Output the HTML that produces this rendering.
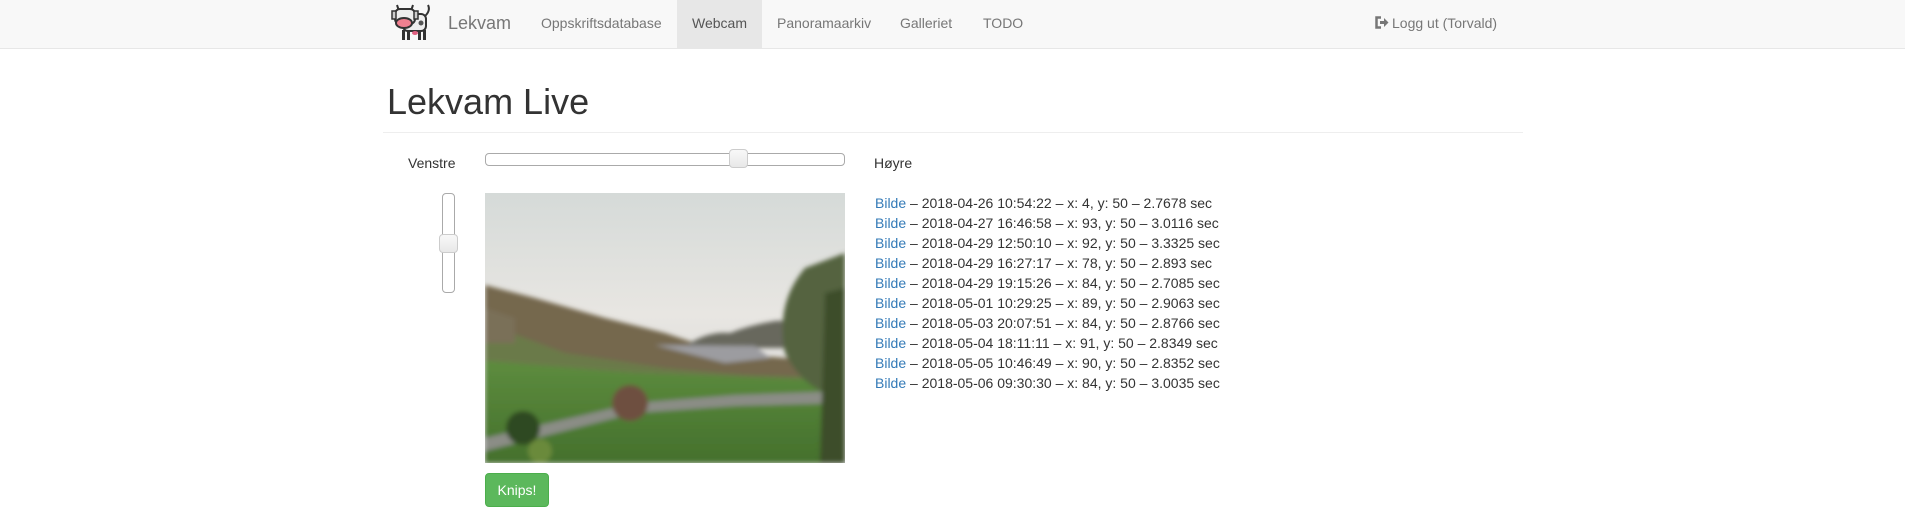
<!DOCTYPE html>
<html><head><meta charset="utf-8"><style>
*{box-sizing:border-box}
body{margin:0;width:1905px;height:522px;background:#fff;font-family:"Liberation Sans",Arial,sans-serif;font-size:14px;color:#333;position:relative;overflow:hidden}
.nav{position:absolute;left:0;top:0;width:1905px;height:49px;background:#f8f8f8;border-bottom:1px solid #e7e7e7}
.a{position:absolute;top:0;height:48px;line-height:46px;color:#777;font-size:14px;white-space:nowrap}
.abs{position:absolute;white-space:nowrap}
.row{line-height:20px}
.row a{color:#337ab7}
</style></head><body>
<div class="nav">
<svg class="abs" style="left:391px;top:3px" width="45" height="38" viewBox="0 0 45 38">
<path d="M6 2 L8 8 M22 2 L20 8" stroke="#333" stroke-width="2"/>
<path d="M33 14 Q40 8 37 2" stroke="#333" stroke-width="2" fill="none"/>
<rect x="12" y="11" width="23" height="17" rx="5" fill="#eee" stroke="#333" stroke-width="2"/>
<rect x="4" y="6" width="20" height="15" rx="5" fill="#eee" stroke="#333" stroke-width="2"/>
<rect x="1" y="8" width="4" height="8" fill="#ccc" stroke="#333" stroke-width="1.5"/>
<rect x="23" y="8" width="4" height="8" fill="#ccc" stroke="#333" stroke-width="1.5"/>
<ellipse cx="13" cy="20" rx="8" ry="5" fill="#f08090" stroke="#333" stroke-width="2"/>
<circle cx="30" cy="20" r="2.5" fill="#555"/>
<rect x="11" y="27" width="3" height="10" fill="#333"/><rect x="16" y="27" width="3" height="10" fill="#333"/>
<rect x="27" y="27" width="3" height="10" fill="#333"/><rect x="32" y="27" width="3" height="10" fill="#333"/>
<ellipse cx="24" cy="30" rx="3" ry="2" fill="#e06080"/>
</svg>
<span class="a" style="left:448px;font-size:18px;line-height:46px">Lekvam</span>
<span class="a" style="left:541px">Oppskriftsdatabase</span>
<span class="a" style="left:677px;width:85px;background:#e7e7e7;color:#555;text-align:center">Webcam</span>
<span class="a" style="left:777px">Panoramaarkiv</span>
<span class="a" style="left:900px">Galleriet</span>
<span class="a" style="left:983px">TODO</span>
<svg class="abs" style="left:1374px;top:16px" width="15" height="13" viewBox="0 0 15 13"><path d="M7 1.5H2.5V11.5H7" stroke="#777" stroke-width="2.5" fill="none"/><path d="M6 5H10V2L14.5 6.5L10 11V8H6Z" fill="#777"/></svg>
<span class="a" style="left:1392px">Logg ut (Torvald)</span>
</div>
<div class="abs" style="left:387px;top:78px;font-size:36px;line-height:48px;color:#333">Lekvam Live</div>
<div class="abs" style="left:383px;top:132px;width:1140px;height:1px;background:#eee"></div>
<div class="abs" style="left:408px;top:153px;line-height:20px">Venstre</div>
<div class="abs" style="left:485px;top:153px;width:360px;height:13px;border:1px solid #aaa;border-radius:4px;background:#fff"></div>
<div class="abs" style="left:729px;top:149px;width:19px;height:19px;border:1px solid #ccc;border-radius:4px;background:linear-gradient(#f8f8f8,#e8e8e8)"></div>
<div class="abs" style="left:874px;top:153px;line-height:20px">Høyre</div>
<div class="abs" style="left:442px;top:193px;width:13px;height:100px;border:1px solid #aaa;border-radius:4px;background:#fff"></div>
<div class="abs" style="left:439px;top:234px;width:19px;height:19px;border:1px solid #ccc;border-radius:4px;background:linear-gradient(#f8f8f8,#e8e8e8)"></div>
<svg class="abs" style="left:485px;top:193px" width="360" height="270" viewBox="0 0 360 270">
<defs><linearGradient id="sky" x1="0" y1="0" x2="0" y2="1"><stop offset="0" stop-color="#d5dad8"/><stop offset="0.45" stop-color="#e8e6e2"/><stop offset="1" stop-color="#d2d3d2"/></linearGradient>
<linearGradient id="g" x1="0" y1="0" x2="0" y2="1"><stop offset="0" stop-color="#5d8c3e"/><stop offset="1" stop-color="#44702c"/></linearGradient>
<filter id="b"><feGaussianBlur stdDeviation="2.5"/></filter></defs>
<rect width="360" height="270" fill="url(#sky)"/>
<g filter="url(#b)">
<path d="M0 92 L50 105 L120 125 L180 140 L240 160 L300 165 L360 170 L360 270 L0 270Z" fill="#74684e"/>
<path d="M205 150 Q225 138 245 140 Q265 132 290 128 Q305 126 320 140 L320 155 L205 155Z" fill="#67675d"/>
<path d="M170 152 L270 153 L285 165 L240 170Z" fill="#9c9ca0"/>
<path d="M0 130 L80 160 L180 175 L260 182 L360 185 L360 270 L0 270Z" fill="#6a7a4a"/>
<path d="M0 168 L150 180 L360 188 L360 270 L0 270Z" fill="url(#g)"/>
<path d="M0 245 L150 210 L250 202 L360 198 L360 210 L250 213 L150 220 L0 258Z" fill="#8b8d86"/>
<path d="M320 75 Q290 110 300 160 Q320 200 360 205 L360 60Z" fill="#55633f"/>
<path d="M340 100 L360 95 L360 270 L335 270Z" fill="#3e4e2c"/>
<circle cx="145" cy="210" r="18" fill="#6e5040"/>
<circle cx="38" cy="235" r="17" fill="#2f4a24"/>
<circle cx="55" cy="258" r="12" fill="#6a8a3a"/>
<path d="M0 115 L30 125 L30 150 L0 150Z" fill="#7a7058"/>
</g>
</svg>
<div class="abs" style="left:485px;top:473px;width:64px;height:34px;background:#5cb85c;border:1px solid #4cae4c;border-radius:4px;color:#fff;line-height:32px;text-align:center">Knips!</div>
<div class="abs" style="left:875px;top:193px">
<div class="row"><a>Bilde</a> – 2018-04-26 10:54:22 – x: 4, y: 50 – 2.7678 sec</div>
<div class="row"><a>Bilde</a> – 2018-04-27 16:46:58 – x: 93, y: 50 – 3.0116 sec</div>
<div class="row"><a>Bilde</a> – 2018-04-29 12:50:10 – x: 92, y: 50 – 3.3325 sec</div>
<div class="row"><a>Bilde</a> – 2018-04-29 16:27:17 – x: 78, y: 50 – 2.893 sec</div>
<div class="row"><a>Bilde</a> – 2018-04-29 19:15:26 – x: 84, y: 50 – 2.7085 sec</div>
<div class="row"><a>Bilde</a> – 2018-05-01 10:29:25 – x: 89, y: 50 – 2.9063 sec</div>
<div class="row"><a>Bilde</a> – 2018-05-03 20:07:51 – x: 84, y: 50 – 2.8766 sec</div>
<div class="row"><a>Bilde</a> – 2018-05-04 18:11:11 – x: 91, y: 50 – 2.8349 sec</div>
<div class="row"><a>Bilde</a> – 2018-05-05 10:46:49 – x: 90, y: 50 – 2.8352 sec</div>
<div class="row"><a>Bilde</a> – 2018-05-06 09:30:30 – x: 84, y: 50 – 3.0035 sec</div>
</div>
</body></html>
